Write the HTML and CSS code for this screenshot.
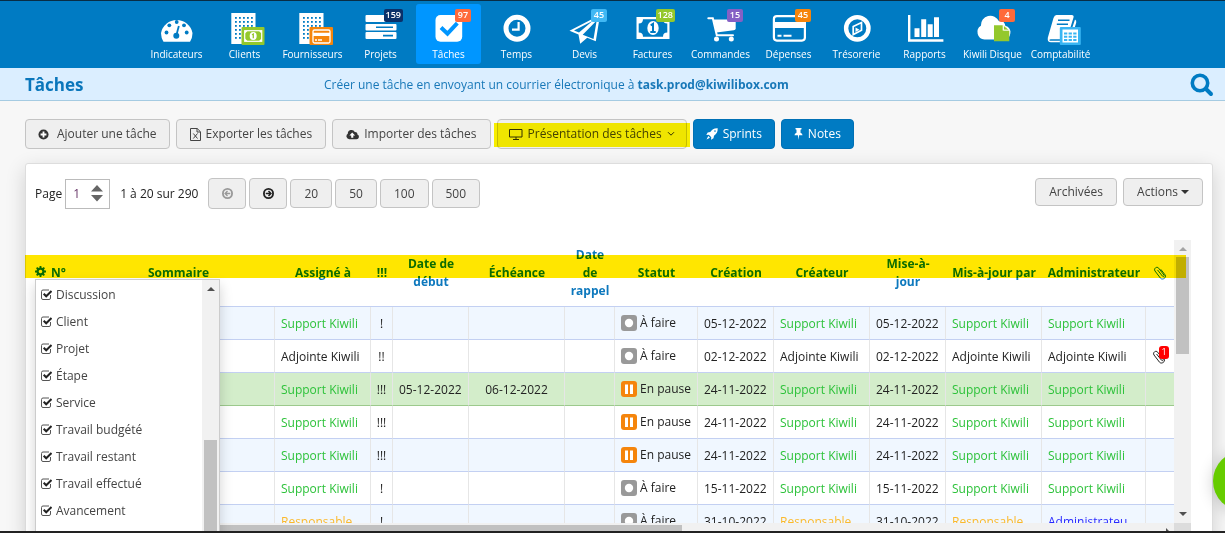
FILE: index.html
```html
<!DOCTYPE html>
<html lang="fr">
<head>
<meta charset="utf-8">
<title>Tâches</title>
<link rel="stylesheet" href="styles.css">
</head>
<body>
<svg class="defs" aria-hidden="true">
  <defs>
    <pattern id="windows" width="4" height="4" patternUnits="userSpaceOnUse" x="12" y="5"><rect width="1.800" height="1.800" fill="#007bc3"/></pattern>
    <symbol id="building" viewBox="0 0 44 34"><path fill="#fff" d="M8.300 1h24.200v31H8.300z"/><path fill="url(#windows)" d="M12 5h18v24H12z"/></symbol>
    <symbol id="clip" viewBox="0 0 14 14"><path fill="none" stroke="currentColor" stroke-width="1" stroke-linecap="round" stroke-linejoin="round" d="M4.800 4.300l4.700 5.900c.9 1.100 2.300 0 1.400-1.200L5.700 2.200C4-.1.200 2.500 2 5l5.500 7.200c2 2.300 6.400-.6 4.600-3.300L8 3.600"/></symbol>
    <symbol id="todo" viewBox="0 0 16 16"><rect width="16" height="16" rx="3" fill="#999"/><circle cx="8" cy="8" r="4.200" fill="#fff"/></symbol>
    <symbol id="pause" viewBox="0 0 16 16"><rect width="16" height="16" rx="3" fill="#f5850c"/><path fill="#fff" d="M4 3.500h3v9.500H4zM9 3.500h3v9.500H9z"/></symbol>
  </defs>
</svg>

<nav class="nav">
  <a class="nav-item" href="#"><svg viewBox="0 0 44 34"><path fill="#fff" d="M8.500 29.700Q6 26 6 21a16 15.700 0 0 1 31.500 0q0 5-2.500 8.700z"/><g fill="#007bc3"><circle cx="11.500" cy="20.500" r="1.900"/><circle cx="14.300" cy="13.300" r="1.900"/><circle cx="21.700" cy="10" r="1.900"/><circle cx="29" cy="13.300" r="1.900"/><circle cx="31.700" cy="20.500" r="1.900"/><circle cx="21.300" cy="23.800" r="3"/></g><path stroke="#007bc3" stroke-width="1.800" d="M21.500 23l2.300-9"/></svg><span>Indicateurs</span></a>
  <a class="nav-item" href="#"><svg viewBox="0 0 44 34"><use href="#building"/><rect x="18.500" y="15" width="23" height="18" rx="1" fill="#94c82c"/><rect x="21.700" y="18.700" width="17" height="10.600" fill="none" stroke="#fff" stroke-width="1.200"/><path fill="#fff" d="M22 19h2.500L22 21.500zM38.500 19H36l2.500 2.500zM22 29h2.500L22 26.500zM38.500 29H36l2.500-2.500z"/><ellipse cx="30.200" cy="24" rx="3.500" ry="4" fill="#fff"/><path fill="none" stroke="#94c82c" stroke-width="1.300" d="M29 22.700l1.300-.7v4.300"/></svg><span>Clients</span></a>
  <a class="nav-item" href="#"><svg viewBox="0 0 44 34"><use href="#building"/><rect x="18.500" y="15" width="23.500" height="18" rx="1" fill="#f5850c"/><rect x="22" y="18" width="17" height="13" rx="1.500" fill="none" stroke="#fff" stroke-width="1.300"/><path fill="#fff" d="M22 20.700h17v3.300H22zM24 27.300h2v1.400h-2zM27 27.300h4v1.400h-4z"/></svg><span>Fournisseurs</span></a>
  <a class="nav-item" href="#"><svg viewBox="0 0 44 34"><g fill="#fff"><rect x="6.500" y="3" width="31" height="7" rx="1"/><rect x="6.500" y="12" width="31" height="6.500" rx="1"/><rect x="6.500" y="20" width="31" height="7" rx="1"/></g><path stroke="#007bc3" stroke-width="1.600" d="M17 15.200h17M24 23.600h10"/></svg><span>Projets</span><b class="badge navy">159</b></a>
  <a class="nav-item active" href="#"><svg viewBox="0 0 44 34"><rect x="8.500" y="3" width="26.700" height="26.700" rx="5" fill="#fff"/><path fill="none" stroke="#0096ff" stroke-width="4" d="M14 15.500l6.500 6.200 9.800-10.500"/></svg><span>Tâches</span><b class="badge red">97</b></a>
  <a class="nav-item" href="#"><svg viewBox="0 0 44 34"><circle cx="22" cy="16.300" r="11" fill="none" stroke="#fff" stroke-width="5"/><path fill="none" stroke="#fff" stroke-width="2.200" d="M23.600 10v7.700H17"/></svg><span>Temps</span></a>
  <a class="nav-item" href="#"><svg viewBox="0 0 44 34"><path fill="#fff" fill-rule="evenodd" d="M6.500 18.700L37 3l-4.200 26.300-8.600-3.600-7 6-1.700-9.300zM11 18.500l5 2L29.500 9zM19.700 22.800l10.800 4.200L33.700 8.500z"/></svg><span>Devis</span><b class="badge sky">45</b></a>
  <a class="nav-item" href="#"><svg viewBox="0 0 44 34"><path fill="#fff" d="M5.500 5h33v22h-33z"/><path fill="#007bc3" d="M12 7.300h20q0 4.200 4.300 4.200v9q-4.300 0-4.300 4.200H12q0-4.200-4.300-4.200v-9q4.300 0 4.300-4.200z"/><ellipse cx="22" cy="16" rx="5.700" ry="7" fill="#fff"/><path fill="none" stroke="#007bc3" stroke-width="2" d="M19.700 13.300l2.300-1.400v7.600M19.300 20h5.400"/></svg><span>Factures</span><b class="badge green">128</b></a>
  <a class="nav-item" href="#"><svg viewBox="0 0 44 34"><path fill="none" stroke="#fff" stroke-width="2" stroke-linecap="round" d="M9.300 6.200h4.500l4 17H34"/><path fill="#fff" d="M14.500 7.500h22.200v8.700q0 1.800-2 2.100L17.500 20.500z"/><circle cx="17.500" cy="27" r="2.500" fill="#fff"/><circle cx="32.300" cy="27" r="2.500" fill="#fff"/></svg><span>Commandes</span><b class="badge violet">15</b></a>
  <a class="nav-item" href="#"><svg viewBox="0 0 44 34"><rect x="6.900" y="4.100" width="31" height="24.500" rx="3" fill="none" stroke="#fff" stroke-width="2.200"/><path fill="#fff" d="M6 10h33v6H6zM10.500 22.800h4v1.900h-4zM16.500 22.800h8v1.900h-8z"/></svg><span>Dépenses</span><b class="badge orange">45</b></a>
  <a class="nav-item" href="#"><svg viewBox="0 0 44 34"><circle cx="22.300" cy="16.300" r="11.200" fill="none" stroke="#fff" stroke-width="4.400"/><path fill="none" stroke="#fff" stroke-width="1.700" d="M18.200 14.600l8.300-4v7.700l-8.300 4.200z"/><path fill="#fff" d="M20.500 15.500l4 2.200-4 2.300z"/></svg><span>Trésorerie</span></a>
  <a class="nav-item" href="#"><svg viewBox="0 0 44 34"><path fill="#fff" d="M5 3h2.400v24.300h33V29.700H5zM11.500 16.300h5V25h-5zM18.200 7.300h5V25h-5zM24.700 12.300h5V25h-5zM31 5.300h5V25h-5z"/></svg><span>Rapports</span></a>
  <a class="nav-item" href="#"><svg viewBox="0 0 44 34"><path fill="#fff" d="M13.500 27.500a7.500 7.500 0 0 1-3.600-13.800A9.500 9.500 0 0 1 28 9.200q5.500-.8 6.300 4.600A7 7 0 0 1 33 27.500z"/><path fill="#94c82c" d="M23 13.300h8.700v5.300h6.600v10.700H23z"/><path fill="#94c82c" d="M32.500 13.300l5.800 4.700h-5.800z" stroke="#fff" stroke-width=".8"/></svg><span>Kiwili Disque</span><b class="badge red">4</b></a>
  <a class="nav-item" href="#"><svg viewBox="0 0 44 34"><path fill="#fff" d="M17.500 3h15.200q2.500 0 1.800 2.500L28.500 25q-.8 2.300-3 2.300H12q-2 0-1.500 1.400H24v1.600H12q-3.800 0-3.200-4.600L14.500 6q1-3 3-3zM36 7.500q1.800 1 1.200 3.300L33 24h-2.500z"/><path stroke="#007bc3" stroke-width="1.600" d="M19 8.300h11.500M17.800 12.300H29"/><rect x="20.800" y="15" width="21" height="18" rx="1" fill="#38b5f3"/><path fill="#fff" d="M23.500 17.500h15.500v13H23.500z"/><path fill="#38b5f3" d="M25 20.500h3.300v2H25zM29.600 20.500h3.300v2h-3.300zM34.200 20.500h3.300v2h-3.300zM25 23.700h3.300v2H25zM29.600 23.700h3.300v2h-3.300zM34.200 23.700h3.300v2h-3.300zM25 26.900h3.300v2H25zM29.600 26.900h3.300v2h-3.300zM34.200 26.900h3.300v2h-3.300z"/></svg><span>Comptabilité</span></a>
</nav>

<header class="subhead">
  <h1>Tâches</h1>
  <p>Créer une tâche en envoyant un courrier électronique à <a href="#">task.prod@kiwilibox.com</a></p>
  <button class="search" aria-label="Rechercher"><svg viewBox="0 0 24 24" width="24" height="24"><circle cx="10" cy="10" r="7.700" fill="none" stroke="#007bc3" stroke-width="3.600"/><path stroke="#007bc3" stroke-width="4" stroke-linecap="round" d="M16 16l5 5"/></svg></button>
</header>

<main class="page">
  <div class="toolbar">
    <button class="btn wide"><svg viewBox="0 0 12 12" width="11" height="11"><circle cx="6" cy="6" r="5.500" fill="#333"/><path stroke="#fff" stroke-width="2" d="M6 2.800v6.400M2.800 6h6.400"/></svg>Ajouter une tâche</button>
    <button class="btn"><svg viewBox="0 0 11 13" width="11" height="13"><path fill="none" stroke="#444" d="M.5.500h6.700l3.300 3.300v8.700H.500zM7 .500v3.500h3.500M3.300 5.500l4.200 5M7.500 5.500l-4.200 5"/></svg>Exporter les tâches</button>
    <button class="btn"><svg viewBox="0 0 13 11" width="13" height="11"><path fill="#333" d="M3.300 10.300A3 3 0 0 1 1.800 4.800 3.700 3.700 0 0 1 8.800 3a2.300 2.300 0 0 1 2.600 2.500 2.500 2.500 0 0 1-.9 4.800z"/><path fill="#fff" d="M6.200 3.500l2.900 3H7.300v2.300H5.200V6.500H3.400z"/></svg>Importer des tâches</button>
    <button class="btn marked"><svg viewBox="0 0 14 11" width="14" height="11"><path fill="none" stroke="#333" d="M.5.500h12.500v7.500H.500zM4 10.500h6M7 8v2.500"/></svg>Présentation des tâches<svg class="chev" viewBox="0 0 8 6" width="8" height="6"><path fill="none" stroke="#333" d="M1 1.200l3 3 3-3"/></svg></button>
    <button class="btn blue"><svg viewBox="0 0 12 12" width="12" height="12"><path fill="#fff" fill-rule="evenodd" d="M11.700.300C8 .100 6 1.500 4.300 4L1.700 4.500.300 7l2.500-.3L5.300 9.200 5 11.700l2.500-1.400L8 7.700C10.500 6 11.900 4 11.700.300zM9 2.300a.8.800 0 1 1 0 1.600.8.800 0 0 1 0-1.600zM2.300 8L.5 11.500 4 9.700z"/></svg>Sprints</button>
    <button class="btn blue"><svg viewBox="0 0 8 12" width="9" height="12"><path fill="#fff" d="M1 0h6v1.200l-1 .5v3q2 .7 2 2.600H4.600L4 12l-.6-4.700H0q0-1.900 2-2.600v-3l-1-.5z"/></svg>Notes</button>
  </div>

  <section class="card">
    <div class="pager">
      <label for="page">Page</label>
      <span class="stepper"><input id="page" type="text" value="1"><svg viewBox="0 0 12 17" width="12" height="17"><path fill="#666" d="M0 6.500L6 0l6 6.500zM0 10h12l-6 6.500z"/></svg></span>
      <span class="range">1 à 20 sur 290</span>
      <div class="sizes">
        <button class="btn arrow" disabled aria-label="Page précédente"><svg viewBox="0 0 12 12" width="11" height="11"><circle cx="6" cy="6" r="5" fill="none" stroke="#999" stroke-width="2"/><path fill="none" stroke="#999" stroke-width="1.500" d="M9 6H3.500M6 3.300L3.400 6 6 8.700"/></svg></button>
        <button class="btn arrow" aria-label="Page suivante"><svg viewBox="0 0 12 12" width="11" height="11"><circle cx="6" cy="6" r="5" fill="none" stroke="#222" stroke-width="2"/><path fill="none" stroke="#222" stroke-width="1.700" d="M3 6h5.500M6 3.300L8.600 6 6 8.700"/></svg></button>
        <button class="btn size">20</button><button class="btn size">50</button><button class="btn size">100</button><button class="btn size">500</button>
      </div>
      <div class="actions">
        <button class="btn low">Archivées</button>
        <button class="btn low">Actions<svg class="caret" viewBox="0 0 8 4" width="8" height="4"><path fill="#333" d="M0 0h8L4 4z"/></svg></button>
      </div>
    </div>

    <div class="grid">
      <div class="rows">
        <table>
          <colgroup><col class="c-num"><col><col class="c-name"><col class="c-prio"><col class="c-date"><col class="c-name"><col class="c-rem"><col class="c-stat"><col class="c-date"><col class="c-name"><col class="c-date"><col class="c-name"><col class="c-admin"><col class="c-clip"></colgroup>
          <thead><tr>
            <th class="first"><svg viewBox="0 0 12 12" width="11" height="11"><circle cx="6" cy="6" r="3.200" fill="none" stroke="#0d78bd" stroke-width="2.400"/><path stroke="#0d78bd" stroke-width="2" d="M6 0v2.500M6 9.500V12M0 6h2.500M9.500 6H12M1.800 1.800l1.700 1.700M8.500 8.500l1.700 1.700M10.200 1.800L8.500 3.500M3.500 8.500l-1.700 1.700"/></svg>N°</th>
            <th>Sommaire</th><th>Assigné à</th><th>!!!</th><th>Date de<br>début</th><th>Échéance</th><th>Date<br>de<br>rappel</th><th>Statut</th><th>Création</th><th>Créateur</th><th>Mise-à-<br>jour</th><th>Mis-à-jour par</th><th>Administrateur</th><th aria-label="Pièces jointes"><svg class="clip" width="14" height="14"><use href="#clip"/></svg></th>
          </tr></thead>
          <tbody>
            <tr class="odd"><td></td><td></td><td class="g">Support Kiwili</td><td class="mid">!</td><td></td><td></td><td></td><td><span class="st"><svg><use href="#todo"/></svg>À faire</span></td><td>05-12-2022</td><td class="g">Support Kiwili</td><td>05-12-2022</td><td class="g">Support Kiwili</td><td class="g">Support Kiwili</td><td></td></tr>
            <tr><td></td><td></td><td>Adjointe Kiwili</td><td class="mid">!!</td><td></td><td></td><td></td><td><span class="st"><svg><use href="#todo"/></svg>À faire</span></td><td>02-12-2022</td><td>Adjointe Kiwili</td><td>02-12-2022</td><td>Adjointe Kiwili</td><td>Adjointe Kiwili</td><td><span class="attach"><svg class="clip" width="14" height="14"><use href="#clip"/></svg><b>1</b></span></td></tr>
            <tr class="sel"><td></td><td></td><td class="g">Support Kiwili</td><td class="mid">!!!</td><td>05-12-2022</td><td class="mid">06-12-2022</td><td></td><td><span class="st"><svg><use href="#pause"/></svg>En pause</span></td><td>24-11-2022</td><td class="g">Support Kiwili</td><td>24-11-2022</td><td class="g">Support Kiwili</td><td class="g">Support Kiwili</td><td></td></tr>
            <tr><td></td><td></td><td class="g">Support Kiwili</td><td class="mid">!!!</td><td></td><td></td><td></td><td><span class="st"><svg><use href="#pause"/></svg>En pause</span></td><td>24-11-2022</td><td class="g">Support Kiwili</td><td>24-11-2022</td><td class="g">Support Kiwili</td><td class="g">Support Kiwili</td><td></td></tr>
            <tr class="odd"><td></td><td></td><td class="g">Support Kiwili</td><td class="mid">!!!</td><td></td><td></td><td></td><td><span class="st"><svg><use href="#pause"/></svg>En pause</span></td><td>24-11-2022</td><td class="g">Support Kiwili</td><td>24-11-2022</td><td class="g">Support Kiwili</td><td class="g">Support Kiwili</td><td></td></tr>
            <tr><td></td><td></td><td class="g">Support Kiwili</td><td class="mid">!</td><td></td><td></td><td></td><td><span class="st"><svg><use href="#todo"/></svg>À faire</span></td><td>15-11-2022</td><td class="g">Support Kiwili</td><td>15-11-2022</td><td class="g">Support Kiwili</td><td class="g">Support Kiwili</td><td></td></tr>
            <tr class="odd"><td></td><td></td><td class="y">Responsable</td><td class="mid">!</td><td></td><td></td><td></td><td><span class="st"><svg><use href="#todo"/></svg>À faire</span></td><td>31-10-2022</td><td class="y">Responsable</td><td>31-10-2022</td><td class="y">Responsable</td><td class="b">Administrateu</td><td></td></tr>
          </tbody>
        </table>
      </div>
      <div class="vbar"><i class="up"></i><i class="thumb"></i><i class="down"></i></div>
      <div class="hbar"><i class="thumb"></i><i class="right"></i></div>
      <div class="corner"></div>
      <div class="highlight"></div>
      <div class="columns-menu">
        <div class="choices">
          <label><input type="checkbox" checked>Discussion</label>
          <label><input type="checkbox" checked>Client</label>
          <label><input type="checkbox" checked>Projet</label>
          <label><input type="checkbox" checked>Étape</label>
          <label><input type="checkbox" checked>Service</label>
          <label><input type="checkbox" checked>Travail budgété</label>
          <label><input type="checkbox" checked>Travail restant</label>
          <label><input type="checkbox" checked>Travail effectué</label>
          <label><input type="checkbox" checked>Avancement</label>
        </div>
        <div class="menu-bar"><i class="up"></i><i class="thumb"></i></div>
      </div>
    </div>
  </section>
</main>
<button class="help" aria-label="Aide"></button>
</body>
</html>
```
FILE: styles.css
```css
* { box-sizing: border-box; }
body {
  margin: 0;
  height: 100vh;
  display: flex;
  flex-direction: column;
  overflow: hidden;
  border-top: 1px solid #082d45;
  border-bottom: 2px solid #222;
  background: #f7f7f7;
  color: #222;
  font: 12px/18px "Open Sans", "Noto Sans", sans-serif;
}
button, input { font: inherit; color: inherit; }
button { cursor: pointer; }
a { color: inherit; text-decoration: none; }
svg { flex: none; display: block; }
.defs { position: absolute; width: 0; height: 0; }

/* Main navigation */
.nav {
  flex: none;
  display: flex;
  gap: 3px;
  padding: 3px 0 4px 144px;
  background: #007bc3;
}
.nav-item {
  position: relative;
  flex: none;
  width: 65px;
  height: 60px;
  padding-top: 8px;
  display: flex;
  flex-direction: column;
  align-items: center;
  border-radius: 3px;
  color: #fff;
  font-size: 10px;
  line-height: 16px;
  white-space: nowrap;
}
.nav-item > svg { width: 44px; height: 34px; }
.nav-item.active { background: #0096ff; }
.badge {
  position: absolute;
  top: 5px;
  right: 10px;
  min-width: 16px;
  height: 13px;
  padding: 0 2px;
  border-radius: 2px;
  font-size: 9px;
  font-weight: 600;
  line-height: 12px;
  text-align: center;
}
.navy { background: #0a3069; }
.red { background: #ff6a3a; }
.sky { background: #40b8f4; }
.green { background: #94c82c; }
.violet { background: #8560c5; }
.orange { background: #f5850c; }

/* Title strip */
.subhead {
  flex: none;
  height: 33px;
  display: flex;
  align-items: center;
  padding: 2px 11px 0 25px;
  background: #dbeeff;
  border-bottom: 1px solid #a5cbe2;
  color: #1878b8;
}
.subhead h1 { margin: 0; width: 299px; font-size: 17px; line-height: 24px; font-weight: 700; color: #0a76bb; }
.subhead p { margin: 0; flex: 1; }
.subhead p a { font-weight: 700; }
.search { padding: 0; border: 0; background: none; }

/* Buttons */
.page { flex: 1; min-height: 0; }
.toolbar { display: flex; gap: 6px; padding: 18px 0 14px 25px; }
.btn {
  display: flex;
  align-items: center;
  justify-content: center;
  gap: 5px;
  height: 30px;
  padding: 0 13px;
  border: 1px solid #c4c4c4;
  border-radius: 4px;
  background: #efefef;
  color: #444;
  white-space: nowrap;
}
.btn.wide { gap: 8px; padding: 0 12px; }
.btn.blue { padding: 0 12px; border-color: #0070b5; background: #007bc3; color: #fff; font-weight: 500; }
.btn.marked { position: relative; padding: 0 11px; }
.btn.marked::after {
  content: "";
  position: absolute;
  inset: 3px -4px 1px;
  background: #fff500;
  mix-blend-mode: multiply;
}

/* Task card */
.card {
  margin: 0 12px 0 25px;
  padding: 14px 9px 0;
  border: 1px solid #ddd;
  border-radius: 3px;
  background: #fff;
  box-shadow: 0 6px 20px rgba(0, 0, 0, .16);
}
.pager { display: flex; align-items: center; height: 31px; }
.stepper {
  display: flex;
  align-items: center;
  justify-content: space-between;
  width: 45px;
  height: 30px;
  margin: 0 10px 0 3px;
  padding: 0 6px;
  border: 1px solid #bbb;
}
.stepper input { width: 16px; padding: 0 0 0 1px; border: 0; outline: 0; background: none; color: #636; }
.sizes { display: flex; align-items: center; gap: 3px; margin-left: 10px; }
.arrow { width: 38px; height: 31px; }
.size { height: 29px; }
.actions { display: flex; gap: 6px; margin-left: auto; align-self: flex-start; }
.low { height: 28px; }
.caret { margin-left: -2px; }

/* Grid with its scroll bars */
.grid {
  position: relative;
  display: grid;
  grid-template-columns: 1fr 17px;
  grid-template-rows: 283px 17px;
  margin: 31px 12px 0 0;
}
.rows { overflow: hidden; }
table { width: 100%; border-collapse: separate; border-spacing: 0; table-layout: fixed; }
.c-num { width: 47px; }
.c-name { width: 96px; }
.c-prio { width: 22px; }
.c-date { width: 76px; }
.c-rem { width: 50px; }
.c-stat { width: 83px; }
.c-admin { width: 104px; }
.c-clip { width: 28px; }
th {
  height: 67px;
  padding: 0;
  border-bottom: 1px solid #c3d0f2;
  color: #0d78bd;
  font-weight: 700;
  white-space: nowrap;
}
th.first { text-align: left; }
th.first svg { display: inline-block; margin-right: 5px; }
th .clip { margin: 0 auto; }
td {
  height: 33px;
  padding: 2px 0 0 6px;
  border-right: 1px solid #e6e6e6;
  border-bottom: 1px solid #c3d0f2;
  white-space: nowrap;
}
td:last-child { border-right: 0; }
td.mid { padding: 2px 0 0; text-align: center; }
.odd td { background: #f0f7ff; }
.sel td { background: #d3edca; border-bottom-color: #9cc98c; }
.g { color: #2dc23a; }
.y { color: #fbb92c; }
.b { color: #2a2aff; }
.st { display: flex; align-items: center; gap: 3px; padding-bottom: 2px; }
.st svg { width: 16px; height: 16px; }
.attach { position: relative; display: block; width: 16px; }
.attach b {
  position: absolute;
  top: -4px;
  right: -1px;
  width: 10px;
  height: 13px;
  border-radius: 3px;
  background: #f00;
  color: #fff;
  font-size: 9px;
  font-weight: 400;
  line-height: 12px;
  text-align: center;
}

.vbar, .menu-bar { display: flex; flex-direction: column; align-items: center; width: 17px; background: #f1f1f1; }
.hbar { display: flex; justify-content: space-between; align-items: center; padding-right: 4px; background: #f1f1f1; }
.corner { background: #dcdcdc; }
.thumb { background: #c1c1c1; }
.up { margin: 7px 0 6px; border: 4px solid transparent; border-top: 0; border-bottom-color: #505050; }
.vbar .up { border-bottom-color: #a3a3a3; }
.vbar .thumb { width: 13px; height: 97px; }
.down { margin: auto 0 7px; border: 4px solid transparent; border-bottom: 0; border-top-color: #505050; }
.hbar .thumb { width: 57%; height: 13px; }
.right { border: 4px solid transparent; border-right: 0; border-left-color: #505050; }
.highlight {
  position: absolute;
  top: 15px;
  left: -10px;
  right: 5px;
  height: 23px;
  background: #ffe600;
  mix-blend-mode: multiply;
}

/* Column chooser */
.columns-menu {
  position: absolute;
  top: 39px;
  left: 0;
  width: 185px;
  height: 300px;
  display: flex;
  justify-content: space-between;
  border: 1px solid #ccc;
  background: #fff;
  box-shadow: 0 6px 12px rgba(0, 0, 0, .18);
}
.choices { padding: 1px 0 0 5px; }
.choices label { display: flex; align-items: center; gap: 4px; height: 27px; color: #444; }
.choices input {
  appearance: none;
  width: 11px;
  height: 11px;
  margin: 0;
  background: url("data:image/svg+xml,%3Csvg xmlns='http://www.w3.org/2000/svg' viewBox='0 0 11 11'%3E%3Cpath fill='none' stroke='%23555' d='M9.500 6v3q0 1.500-1.500 1.500H2Q.5 10.500.5 9V2.500Q.5 1 2 1h6'/%3E%3Cpath fill='none' stroke='%23222' stroke-width='2' d='M2.700 4.700l2.500 2.600L10.500 2'/%3E%3C/svg%3E") center / contain no-repeat;
}
.menu-bar .thumb { width: 13px; flex: 1; margin-top: 143px; }

.help {
  position: fixed;
  right: -48px;
  bottom: 22px;
  width: 60px;
  height: 60px;
  border: 0;
  border-radius: 50%;
  background: #66cc00;
  box-shadow: 0 2px 16px rgba(0, 0, 0, .2);
}
```
